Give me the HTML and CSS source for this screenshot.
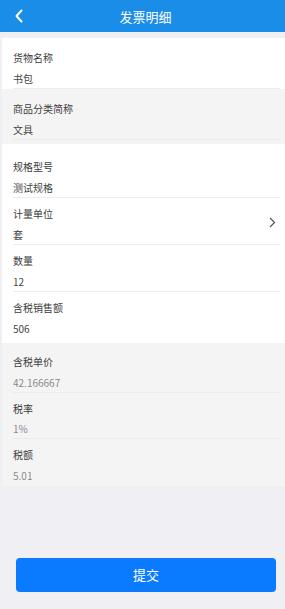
FILE: index.html
```html
<!DOCTYPE html>
<html lang="zh-CN">
<head>
    <meta charset="UTF-8">
    <meta name="viewport" content="width=device-width, initial-scale=1.0">
    <title>发票明细</title>
    <link rel="stylesheet" href="styles.css">
</head>
<body>
    <div class="page">
        <header class="nav-bar">
            <a href="#" class="nav-back">
                <svg width="10" height="14" viewBox="0 0 10 14"><path d="M7.5 1.5 L2.5 7 L7.5 12.5" fill="none" stroke="#fff" stroke-width="2" stroke-linecap="round" stroke-linejoin="round"/></svg>
            </a>
            <h1>发票明细</h1>
        </header>

        <div class="group">
            <div class="cell">
                <div class="cell-label">货物名称</div>
                <div class="cell-value">书包</div>
            </div>
        </div>

        <div class="group group-gray">
            <div class="cell">
                <div class="cell-label">商品分类简称</div>
                <div class="cell-value">文具</div>
            </div>
        </div>

        <div class="group group-wide">
            <div class="cell">
                <div class="cell-label">规格型号</div>
                <div class="cell-value">测试规格</div>
            </div>
            <div class="cell cell-link">
                <div class="cell-label">计量单位</div>
                <div class="cell-value">套</div>
                <svg class="cell-arrow" width="7" height="11" viewBox="0 0 7 11"><path d="M1 1 L5.5 5.5 L1 10" fill="none" stroke="#555" stroke-width="1.2"/></svg>
            </div>
            <div class="cell">
                <div class="cell-label">数量</div>
                <div class="cell-value">12</div>
            </div>
            <div class="cell cell-last">
                <div class="cell-label">含税销售额</div>
                <div class="cell-value">506</div>
            </div>
        </div>

        <div class="group group-gray group-readonly">
            <div class="cell">
                <div class="cell-label">含税单价</div>
                <div class="cell-value muted">42.166667</div>
            </div>
            <div class="cell">
                <div class="cell-label">税率</div>
                <div class="cell-value muted">1%</div>
            </div>
            <div class="cell cell-last">
                <div class="cell-label">税额</div>
                <div class="cell-value muted">5.01</div>
            </div>
        </div>

        <div class="footer">
            <a href="#" class="submit-btn">提交</a>
        </div>
    </div>
</body>
</html>
```

FILE: styles.css
```css
* {
    box-sizing: border-box;
}
body {
    margin: 0;
    padding: 0;
    font-family: "Noto Sans CJK SC", "Noto Sans", sans-serif;
    background: #efeff4;
    color: #333;
}
.page {
    display: flex;
    flex-direction: column;
    min-height: 100vh;
}
.nav-bar {
    position: relative;
    height: 32px;
    background: #1a8de9;
    display: flex;
    align-items: center;
    justify-content: center;
    margin-bottom: 6px;
}
.nav-bar h1 {
    margin: 0 0 0 6px;
    font-size: 13px;
    font-weight: normal;
    color: #fff;
}
.nav-back {
    position: absolute;
    left: 14px;
    top: 9px;
    display: flex;
}
.group {
    background: #fff;
    margin-left: 2px;
    padding: 4px 0 0 0;
}
.group-wide {
    padding: 7px 0 4px 0;
}
.group-gray {
    background: #f4f4f4;
    padding-bottom: 4px;
}
.group-readonly {
    padding: 3px 0 0 0;
}
.group-readonly .cell {
    height: 46.5px;
}
.cell {
    position: relative;
    height: 47px;
    margin: 0 5px 0 11px;
    padding-top: 8px;
    border-bottom: 1px solid #ececec;
}
.cell-last {
    border-bottom: none;
}
.cell-label {
    font-size: 10px;
    line-height: 16px;
    color: #3c3c3c;
}
.cell-value {
    margin-top: 4.5px;
    font-size: 10px;
    line-height: 16px;
    color: #444;
}
.cell-value.muted {
    color: #8a8a8a;
}
.cell-arrow {
    position: absolute;
    right: 4px;
    top: 19px;
}
.footer {
    margin-top: auto;
    padding: 0 9px 17px 16px;
}
.submit-btn {
    display: block;
    height: 34px;
    line-height: 34px;
    text-align: center;
    background: #0a7aff;
    color: #fff;
    font-size: 13px;
    text-decoration: none;
    border-radius: 4px;
}
```
